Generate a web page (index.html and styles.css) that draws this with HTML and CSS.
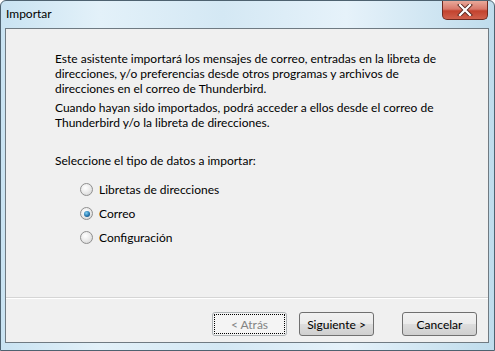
FILE: index.html
```html
<!DOCTYPE html>
<html lang="es">
<head>
<meta charset="UTF-8">
<title>Importar</title>
<link rel="stylesheet" href="styles.css">
</head>
<body>

<div class="window">

    <div class="titlebar">
        <span class="title">Importar</span>
        <div class="close-btn">
            <svg width="16" height="12" viewBox="0 0 16 12">
                <path d="M3 1 L13 11 M13 1 L3 11" stroke="#5a2a22" stroke-width="4" stroke-linecap="square"/>
                <path d="M3 1 L13 11 M13 1 L3 11" stroke="#ffffff" stroke-width="2.2" stroke-linecap="square"/>
            </svg>
        </div>
    </div>

    <div class="client">

        <div class="content">
            <p>Este asistente importará los mensajes de correo, entradas en la libreta de direcciones, y/o preferencias desde otros programas y archivos de direcciones en el correo de Thunderbird.</p>
            <p>Cuando hayan sido importados, podrá acceder a ellos desde el correo de Thunderbird y/o la libreta de direcciones.</p>

            <p class="question">Seleccione el tipo de datos a importar:</p>

            <div class="options">
                <label class="option"><span class="radio"></span>Libretas de direcciones</label>
                <label class="option"><span class="radio checked"></span>Correo</label>
                <label class="option"><span class="radio"></span>Configuración</label>
            </div>
        </div>

        <div class="buttons">
            <button class="btn disabled">&lt; Atrás</button>
            <button class="btn">Siguiente &gt;</button>
            <button class="btn cancel">Cancelar</button>
        </div>

    </div>

</div>

</body>
</html>
```

FILE: styles.css
```css
*{
    box-sizing:border-box;
}

body{
    margin:0;
    font-family:Lato, "Open Sans", sans-serif;
    font-size:12px;
    color:#000;
}

/* window frame */
.window{
    width:495px;
    height:351px;
    background:linear-gradient(90deg,#c9e3f2 0%,#e3f1f9 20%,#d4e8f4 45%,#e6f2fa 70%,#bfdcec 100%);
    border:1px solid #4e6270;
    border-radius:6px 6px 0 0;
    padding:0 5px 7px 4px;
    display:flex;
    flex-direction:column;
}

.titlebar{
    height:27px;
    display:flex;
    justify-content:space-between;
    align-items:flex-start;
}

.title{
    margin:5px 0 0 1px;
    font-size:12px;
}

.close-btn{
    width:46px;
    height:19px;
    margin-right:1px;
    border:1px solid #6e2a20;
    border-top:none;
    border-radius:0 0 5px 5px;
    background:linear-gradient(#e9a99a 0%,#d8786a 45%,#c3432e 55%,#d0604c 100%);
    display:flex;
    align-items:center;
    justify-content:center;
}

/* client area */
.client{
    flex:1;
    background:#f0f0f0;
    border:1px solid #6f7a82;
    display:flex;
    flex-direction:column;
}

.content{
    flex:1;
    padding:22px 36px 0 49px;
    border-bottom:1px solid #d5d5d5;
}

.content p{
    margin:0 0 4px;
    line-height:15px;
}

.content .question{
    margin-top:23px;
}

.options{
    margin:14px 0 0 25px;
    display:flex;
    flex-direction:column;
    gap:9px;
}

.option{
    display:flex;
    align-items:center;
    gap:6px;
    height:15px;
}

.radio{
    width:13px;
    height:13px;
    border-radius:50%;
    border:1px solid #8f8f8f;
    background:radial-gradient(circle at 40% 35%,#ffffff 0%,#eaeaea 50%,#cfcfcf 100%);
    display:flex;
    align-items:center;
    justify-content:center;
}

.radio.checked::after{
    content:"";
    width:6px;
    height:6px;
    border-radius:50%;
    background:radial-gradient(circle at 40% 35%,#7fd0f5 0%,#1f6fa8 60%,#0d3f6a 100%);
}

/* buttons */
.buttons{
    height:44px;
    border-top:1px solid #ffffff;
    display:flex;
    align-items:flex-start;
    justify-content:flex-end;
    padding:13px 11px 0 0;
}

.btn{
    width:75px;
    height:24px;
    margin-left:12px;
    padding:0;
    font-family:Lato, "Open Sans", sans-serif;
    font-size:12px;
    color:#000;
    border:1px solid #707070;
    border-radius:3px;
    background:linear-gradient(#f2f2f2 0%,#ebebeb 50%,#dddddd 51%,#cfcfcf 100%);
}

.btn.disabled{
    color:#838383;
    border:1px solid #adb2b5;
    background:#f4f4f4;
    outline:1px dotted #000;
    outline-offset:-3px;
}

.btn.cancel{
    margin-left:28px;
}
```
